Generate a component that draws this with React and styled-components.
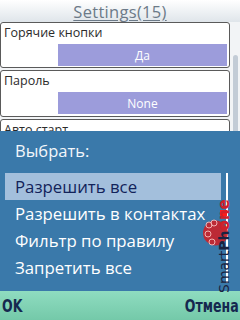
import React from "react";
import styled, { createGlobalStyle } from "styled-components";

const Global = createGlobalStyle`
  html, body { margin: 0; padding: 0; }
  body { width: 240px; height: 320px; overflow: hidden; font-family: "Open Sans", "DejaVu Sans", sans-serif; }
`;

const Screen = styled.div`
  position: relative;
  width: 240px;
  height: 320px;
  display: flex;
  flex-direction: column;
  background: #eef1f4;
  overflow: hidden;
`;

const Header = styled.div`
  height: 22px;
  flex: none;
  display: flex;
  justify-content: center;
  align-items: flex-end;
  background: linear-gradient(#ffffff, #dfe5ea);
`;

const Title = styled.span`
  font-size: 16.5px;
  color: #6c7a88;
  text-decoration: underline;
  text-underline-offset: 2px;
  letter-spacing: 0.3px;
  line-height: 21px;
`;

const Body = styled.div`
  height: 109px;
  flex: none;
  display: flex;
  background: #f2f4f6;
  overflow: hidden;
`;

const List = styled.div`
  width: 230px;
  display: flex;
  flex-direction: column;
  gap: 2px;
`;

const Item = styled.div`
  border: 1px solid #5a5a5a;
  border-radius: 3px;
  background: #ffffff;
  height: ${(p) => p.$h}px;
  flex: none;
  box-sizing: border-box;
  padding: 1px 2px 0 3px;
  display: flex;
  flex-direction: column;
`;

const Label = styled.div`
  font-size: 12.5px;
  color: #2b2b2b;
  line-height: 18px;
`;

const Value = styled.div`
  margin-left: 54px;
  margin-top: 2px;
  height: 22px;
  background: #9c9cdb;
  color: #ffffff;
  font-size: 12px;
  display: flex;
  align-items: center;
  justify-content: center;
`;

const ScrollTrack = styled.div`
  flex: 1;
  display: flex;
  justify-content: center;
  padding-top: 33px;
`;

const ScrollThumb = styled.div`
  width: 5px;
  height: 90px;
  border-radius: 3px;
  background: #c3ccd6;
`;

const Dialog = styled.div`
  flex: 1;
  background: #3a79aa;
  display: flex;
  flex-direction: column;
  padding: 8px 0 0 0;
`;

const DialogTitle = styled.div`
  color: #f2f6fa;
  font-size: 16.5px;
  line-height: 24px;
  padding-left: 15px;
  margin-bottom: 10px;
`;

const Options = styled.div`
  display: flex;
  padding-left: 5px;
`;

const OptionList = styled.div`
  width: 216px;
  display: flex;
  flex-direction: column;
`;

const Option = styled.div`
  height: 27px;
  display: flex;
  align-items: center;
  padding-left: 10px;
  font-size: 16.8px;
  white-space: nowrap;
  color: ${(p) => (p.$active ? "#12235a" : "#ffffff")};
  background: ${(p) => (p.$active ? "#a3bfdc" : "transparent")};
`;

const DialogScroll = styled.div`
  width: 2px;
  height: 110px;
  margin-left: 5px;
  background: #ffffff;
`;

const SoftBar = styled.div`
  height: 29px;
  flex: none;
  display: flex;
  justify-content: space-between;
  align-items: center;
  padding: 0 1px 0 2px;
  background: linear-gradient(#8fdcc0, #74c9a9);
`;

const SoftKey = styled.span`
  font-family: "DejaVu Sans Condensed", "DejaVu Sans", sans-serif;
  font-stretch: condensed;
  font-weight: bold;
  font-size: 17px;
  color: #15284f;
  display: inline-block;
  transform: scaleX(0.82);
  transform-origin: ${(p) => (p.$right ? "right" : "left")} center;
`;

const Watermark = styled.div`
  position: absolute;
  left: 203px;
  top: 183px;
  width: 30px;
  height: 112px;
  pointer-events: none;
`;

export default function App() {
  return (
    <Screen>
      <Global />
      <Header>
        <Title>Settings(15)</Title>
      </Header>
      <Body>
        <List>
          <Item $h={46}>
            <Label>Горячие кнопки</Label>
            <Value>Да</Value>
          </Item>
          <Item $h={47}>
            <Label>Пароль</Label>
            <Value>None</Value>
          </Item>
          <Item $h={30}>
            <Label>Авто старт</Label>
          </Item>
        </List>
        <ScrollTrack>
          <ScrollThumb />
        </ScrollTrack>
      </Body>
      <Dialog>
        <DialogTitle>Выбрать:</DialogTitle>
        <Options>
          <OptionList>
            <Option $active>Разрешить все</Option>
            <Option>Разрешить в контактах</Option>
            <Option>Фильтр по правилу</Option>
            <Option>Запретить все</Option>
          </OptionList>
          <DialogScroll />
        </Options>
      </Dialog>
      <SoftBar>
        <SoftKey>OK</SoftKey>
        <SoftKey $right>Отмена</SoftKey>
      </SoftBar>
      <Watermark>
        <svg width="30" height="112" viewBox="0 0 30 112">
          <circle cx="12.5" cy="50" r="12.5" fill="#c8242b" opacity="0.92" />
          <circle cx="6" cy="42" r="3" fill="none" stroke="#f3b0b0" strokeWidth="1" />
          <circle cx="5" cy="51" r="3" fill="none" stroke="#f3b0b0" strokeWidth="1" />
          <circle cx="9" cy="59" r="3" fill="none" stroke="#f3b0b0" strokeWidth="1" />
          <circle cx="11" cy="40" r="3" fill="none" stroke="#f3b0b0" strokeWidth="1" />
          <rect x="17" y="27" width="7" height="6" fill="#ff1a1a" />
          <text
            transform="translate(26 110) rotate(-90)"
            fontFamily="DejaVu Sans, sans-serif"
            fontSize="14"
          >
            <tspan fill="#1a2340">Smart</tspan>
            <tspan fill="#1a2340" fontWeight="bold">Ph</tspan>
            <tspan fill="#d0202a" fontWeight="bold" fontSize="15">one</tspan>
          </text>
        </svg>
      </Watermark>
    </Screen>
  );
}
